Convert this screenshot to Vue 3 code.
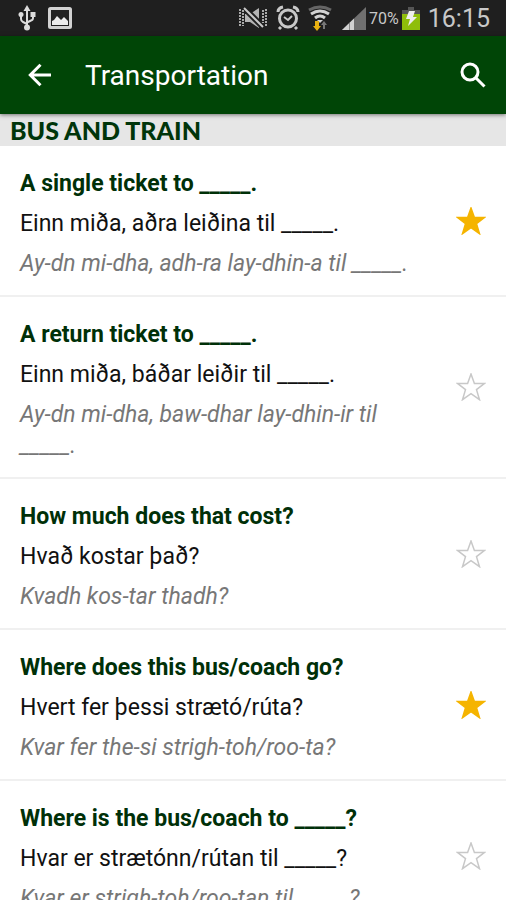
<template>
  <div class="screen">
    <div class="status-bar">
      <div class="status-group">
        <svg class="icon-usb" width="18" height="26" viewBox="0 0 18 26" fill="none" stroke="#dcdcdc" stroke-width="2">
          <path d="M9 4v18M3 11v3q0 2 2 3l4 2M15 10v3q0 2-2 2.500l-4 2" />
          <path d="M9 0l3.500 6h-7z" fill="#dcdcdc" stroke="none" />
          <circle cx="9" cy="22.500" r="3" fill="#dcdcdc" stroke="none" />
          <circle cx="3" cy="9.500" r="2.500" fill="#dcdcdc" stroke="none" />
          <path d="M12.500 7h5v5h-5z" fill="#dcdcdc" stroke="none" />
        </svg>
        <svg width="24" height="22" viewBox="0 0 24 22">
          <rect x="1.500" y="1.500" width="21" height="19" rx="1" fill="#222" stroke="#d2d2d2" stroke-width="3" />
          <path d="M4 18v-4l2-1 3-4 4 4 3-3 4 4v4z" fill="#eee" />
        </svg>
      </div>
      <div class="status-group right">
        <svg class="icon-mute" width="30" height="22" viewBox="0 0 30 22">
          <path d="M7 7h5l9-6v20l-9-6H7z" fill="#b4b4b4" />
          <path d="M6 1l19 19" stroke="#1f1f1f" stroke-width="6" />
          <path d="M6 1l19 19" stroke="#c8c8c8" stroke-width="2" />
          <path d="M2 2v18M28 2v18M5 3v16M25 3v13" fill="none" stroke="#aaa" stroke-width="2" stroke-dasharray="2 1" />
        </svg>
        <svg class="icon-alarm" width="24" height="26" viewBox="0 0 24 26" fill="none" stroke="#c8c8c8">
          <circle cx="12" cy="13.500" r="8.500" stroke-width="3" />
          <path d="M2 7q0-4 5-5M17 2q5 1 5 5M5 22l-2 2M19 22l2 2" stroke-width="3" />
          <path d="M8 12l4 3 4-4" stroke-width="2" />
        </svg>
        <svg class="icon-wifi" width="24" height="26" viewBox="0 0 24 26" fill="none">
          <path d="M1 5q11-6 22 0" stroke="#666" stroke-width="3" />
          <path d="M3 9q9-6 18 0M7 13q5-4 10 0" stroke="#d2d2d2" stroke-width="3" />
          <path d="M9 15h6l-3 3z" fill="#d2d2d2" />
          <path d="M7 16h4v5h2l-4 5-4-5h2z" fill="#e8b010" />
          <path d="M15 24v-4h-2l3-4 3 4h-2v4z" fill="#777" />
        </svg>
        <svg class="icon-signal" width="24" height="23" viewBox="0 0 24 23">
          <path d="M0 23L24 0v23z" fill="#707070" />
          <path d="M0 23l12-11.500V23z" fill="#d2d2d2" />
          <path d="M7.500 16v7" stroke="#888" />
        </svg>
        <span class="battery-level">70%</span>
        <svg class="icon-battery" width="18" height="24" viewBox="0 0 18 24">
          <path d="M6 1h6v3h6v8H0V4h6z" fill="#555" />
          <path d="M0 8h18v16H0z" fill="#8fbe0a" />
          <path d="M7 5h6l-2 6h4L6 20l2-7H4z" fill="#eee" />
        </svg>
        <span class="clock">16:15</span>
      </div>
    </div>

    <header class="app-bar">
      <button class="back-btn" aria-label="Back">
        <svg width="24" height="24" viewBox="0 0 24 24" fill="none" stroke="#fff" stroke-width="3">
          <path d="M23 12H3M12.500 1.800L2.300 12l10.200 10.200" />
        </svg>
      </button>
      <h1 class="title">Transportation</h1>
      <button class="search-btn" aria-label="Search">
        <svg width="26" height="26" viewBox="0 0 26 26" fill="none" stroke="#fff" stroke-width="3">
          <circle cx="10" cy="10" r="8" />
          <path d="M15.500 15.500l9 9" />
        </svg>
      </button>
    </header>

    <main class="content">
      <h2 class="section-title">BUS AND TRAIN</h2>
      <ul class="phrase-list">
        <li v-for="phrase in phrases" :key="phrase.english" class="phrase">
          <div class="phrase-text">
            <p class="english">{{ phrase.english }}</p>
            <p class="icelandic">{{ phrase.icelandic }}</p>
            <p class="pronunciation">{{ phrase.pronunciation }}</p>
          </div>
          <button
            class="star-btn"
            :class="{ active: phrase.favorite }"
            :aria-pressed="phrase.favorite"
            aria-label="Favorite"
            @click="toggleFavorite(phrase)"
          >
            <svg width="30" height="28" viewBox="0 0 30 28">
              <path d="M15 1l3.400 9.400h10.200l-8.100 6.200 3 10.100L15 20.700l-8.500 6 3-10.100-8.100-6.200h10.200z" />
            </svg>
          </button>
        </li>
      </ul>
    </main>
  </div>
</template>

<script setup>
import { ref } from 'vue';

const phrases = ref([
  {
    english: 'A single ticket to _____.',
    icelandic: 'Einn miða, aðra leiðina til _____.',
    pronunciation: 'Ay-dn mi-dha, adh-ra lay-dhin-a til _____.',
    favorite: true
  },
  {
    english: 'A return ticket to _____.',
    icelandic: 'Einn miða, báðar leiðir til _____.',
    pronunciation: 'Ay-dn mi-dha, baw-dhar lay-dhin-ir til _____.',
    favorite: false
  },
  {
    english: 'How much does that cost?',
    icelandic: 'Hvað kostar það?',
    pronunciation: 'Kvadh kos-tar thadh?',
    favorite: false
  },
  {
    english: 'Where does this bus/coach go?',
    icelandic: 'Hvert fer þessi strætó/rúta?',
    pronunciation: 'Kvar fer the-si strigh-toh/roo-ta?',
    favorite: true
  },
  {
    english: 'Where is the bus/coach to _____?',
    icelandic: 'Hvar er strætónn/rútan til _____?',
    pronunciation: 'Kvar er strigh-toh/roo-tan til _____?',
    favorite: false
  }
]);

const toggleFavorite = (phrase) => {
  phrase.favorite = !phrase.favorite;
};
</script>

<style>
body {
  margin: 0;
  background: #fff;
}
</style>

<style scoped>
.screen {
  display: flex;
  flex-direction: column;
  height: 100vh;
  font-family: Roboto, "Noto Sans", sans-serif;
  background: #fff;
}

.status-bar {
  display: flex;
  flex-shrink: 0;
  justify-content: space-between;
  align-items: center;
  height: 36px;
  padding: 0 16px 0 18px;
  background: #1f1f1f;
  color: #c8c8c8;
}

.status-group {
  display: flex;
  align-items: center;
  gap: 12px;
}

.status-group.right {
  gap: 8px;
}

.icon-signal {
  margin-left: 2px;
}

.battery-level {
  margin: 0 -5px;
  font-size: 16px;
}

.clock {
  font-size: 25px;
}

.app-bar {
  position: relative;
  display: flex;
  flex-shrink: 0;
  align-items: center;
  height: 78px;
  background: #004506;
  box-shadow: 0 1px 4px rgba(0, 0, 0, 0.5);
}

.back-btn,
.search-btn,
.star-btn {
  display: flex;
  flex-shrink: 0;
  align-items: center;
  justify-content: center;
  padding: 0;
  border: none;
  background: none;
  cursor: pointer;
}

.back-btn {
  width: 80px;
  height: 78px;
}

.title {
  flex-grow: 1;
  margin: 0;
  padding-left: 5px;
  font-size: 28px;
  font-weight: 400;
  color: #fff;
}

.search-btn {
  width: 66px;
  height: 78px;
}

.content {
  flex-grow: 1;
  min-height: 0;
  overflow-y: auto;
  scrollbar-width: none;
}

.section-title {
  margin: 0;
  padding: 0 10px;
  font-family: "Britannic Bold", Lato, sans-serif;
  font-size: 25px;
  font-weight: 900;
  line-height: 32px;
  color: #00350a;
  background: #e6e6e6;
}

.phrase-list {
  margin: 0;
  padding: 0;
  list-style: none;
}

.phrase {
  display: flex;
  align-items: center;
  border-bottom: 2px solid #f0f0f0;
}

.phrase-text {
  display: flex;
  flex-direction: column;
  flex-grow: 1;
  gap: 9px;
  padding: 22px 20px 16px;
  font-size: 23px;
  line-height: 31px;
}

.phrase-text p {
  margin: 0;
}

.english {
  font-weight: 700;
  color: #003008;
}

.icelandic {
  color: #111;
}

.pronunciation {
  font-style: italic;
  color: #777;
}

.star-btn {
  align-self: stretch;
  width: 70px;
}

.star-btn path {
  fill: #fff;
  stroke: #c8c8c8;
  stroke-width: 1.500;
}

.star-btn.active path {
  fill: #f5b400;
  stroke: #f5b400;
}
</style>
